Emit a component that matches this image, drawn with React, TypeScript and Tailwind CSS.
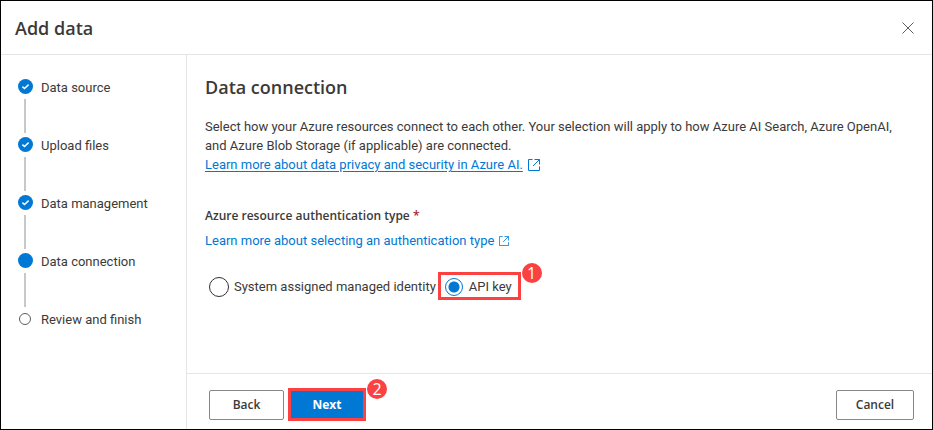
import type { ReactNode } from "react";

type StepState = "done" | "current" | "upcoming";

const steps: { label: string; state: StepState }[] = [
  { label: "Data source", state: "done" },
  { label: "Upload files", state: "done" },
  { label: "Data management", state: "done" },
  { label: "Data connection", state: "current" },
  { label: "Review and finish", state: "upcoming" },
];

function StepMarker({ state }: { state: StepState }) {
  if (state === "upcoming") {
    return (
      <span className="flex size-[15px] items-center">
        <span className="ml-px size-[12px] rounded-full border border-[#605e5c]" />
      </span>
    );
  }
  return (
    <span className="flex size-[15px] items-center justify-center rounded-full bg-[#0078d4]">
      {state === "done" && (
        <svg viewBox="0 0 15 15" className="size-[15px]" fill="none" stroke="#fff" strokeWidth="1.5" aria-hidden="true">
          <path d="M4.4 7.6 6.5 9.5 10.6 5.6" />
        </svg>
      )}
    </span>
  );
}

function ExternalIcon({ className }: { className: string }) {
  return (
    <svg viewBox="0 0 12 12" className={className} fill="none" stroke="#0078d4" aria-hidden="true">
      <path d="M4.5 .5H.5V11.5H11.5V7.5M6.5 .5H11.5V5.5M11.3 .7 5 7" />
    </svg>
  );
}

function Badge({ children }: { children: ReactNode }) {
  return (
    <span className="absolute -top-[12px] -right-[24px] flex size-[20px] items-center justify-center rounded-full bg-[#fb4141] font-['Open_Sans','Noto_Sans',sans-serif] text-base leading-none font-medium text-white">
      {children}
    </span>
  );
}

export default function App() {
  return (
    <div className="flex min-h-screen flex-col border border-black bg-white font-['Roboto','Open_Sans',sans-serif] text-[13px] text-[#3b3a39]">
      <header className="flex h-[54px] items-center justify-between border-b border-[#e5e5e5] pr-[18px] pl-[14px]">
        <h1 className="font-['Open_Sans','Noto_Sans',sans-serif] text-[18px] leading-6 font-semibold">Add data</h1>
        <button type="button" aria-label="Close" className="flex size-[12px] items-center justify-center">
          <svg viewBox="0 0 12 12" className="size-[12px]" stroke="#605e5c" strokeWidth="1" aria-hidden="true">
            <path d="M.5.5 11.5 11.5M11.5.5.5 11.5" />
          </svg>
        </button>
      </header>
      <div className="flex flex-1">
        <nav aria-label="Steps" className="w-[186px] shrink-0 border-r border-[#e5e5e5] pt-6 pl-[17px]">
          <ol>
            {steps.map((step, i) => (
              <li key={step.label} className="flex gap-2">
                <div className="flex w-[15px] flex-col">
                  <StepMarker state={step.state} />
                  {i < steps.length - 1 && <span className="mt-[5px] mb-1 ml-[6px] h-[34px] w-[2px] bg-[#c8c8c8]" />}
                </div>
                <span className="leading-[18px]">{step.label}</span>
              </li>
            ))}
          </ol>
        </nav>
        <div className="flex min-w-0 flex-1 flex-col">
          <main className="flex-1 pt-5 pr-8 pl-[18px]">
            <h2 className="font-['Open_Sans','Noto_Sans',sans-serif] text-[18px] leading-6 font-semibold">Data connection</h2>
            <p className="mt-[18px] leading-[19px]">
              Select how your Azure resources connect to each other. Your selection will apply to how Azure AI Search, Azure OpenAI, and
              Azure Blob Storage (if applicable) are connected.
            </p>
            <a href="#privacy" className="flex w-fit items-center gap-[5px] leading-[19px] text-[#0078d4]">
              <span className="underline underline-offset-2">Learn more about data privacy and security in Azure AI.</span>
              <ExternalIcon className="size-[12px]" />
            </a>
            <fieldset className="mt-8">
              <legend className="font-['Open_Sans','Noto_Sans',sans-serif] text-[12px] leading-5 font-semibold">
                Azure resource authentication type <span className="text-[#a4262c]">*</span>
              </legend>
              <a href="#auth-types" className="mt-[5px] flex w-fit items-center gap-[5px] leading-5 text-[#0078d4]">
                <span>Learn more about selecting an authentication type</span>
                <ExternalIcon className="size-[10px]" />
              </a>
              <div className="mt-[21px] flex items-center gap-0.5">
                <label className="flex h-[28px] items-center gap-[5px] pt-0.5 pl-1">
                  <input
                    type="radio"
                    name="auth"
                    className="size-[20px] appearance-none rounded-full border border-[#323130] checked:border-[#0078d4]"
                  />
                  System assigned managed identity
                </label>
                <label className="relative flex h-[28px] items-center gap-[6px] border-3 border-[#fb4141] pt-0.5 pr-[6px] pl-1">
                  <input
                    type="radio"
                    name="auth"
                    defaultChecked
                    className="size-[18px] appearance-none rounded-full border border-[#0078d4] bg-[radial-gradient(circle,#0078d4_5px,transparent_6px)]"
                  />
                  API key
                  <Badge>1</Badge>
                </label>
              </div>
            </fieldset>
          </main>
          <footer className="flex items-center justify-between border-t border-[#e5e5e5] pt-[14px] pr-[18px] pb-2 pl-[22px] font-['Open_Sans','Noto_Sans',sans-serif] text-[12px] font-semibold">
            <div className="flex items-center gap-1">
              <button type="button" className="h-[30px] w-[75px] rounded-[2px] border border-[#8a8886]">
                Back
              </button>
              <button type="button" className="relative h-[33px] w-[78px] border-3 border-[#fb4141] bg-[#0078d4] font-bold text-white">
                Next
                <Badge>2</Badge>
              </button>
            </div>
            <button type="button" className="h-[30px] w-[78px] rounded-[2px] border border-[#8a8886]">
              Cancel
            </button>
          </footer>
        </div>
      </div>
    </div>
  );
}
